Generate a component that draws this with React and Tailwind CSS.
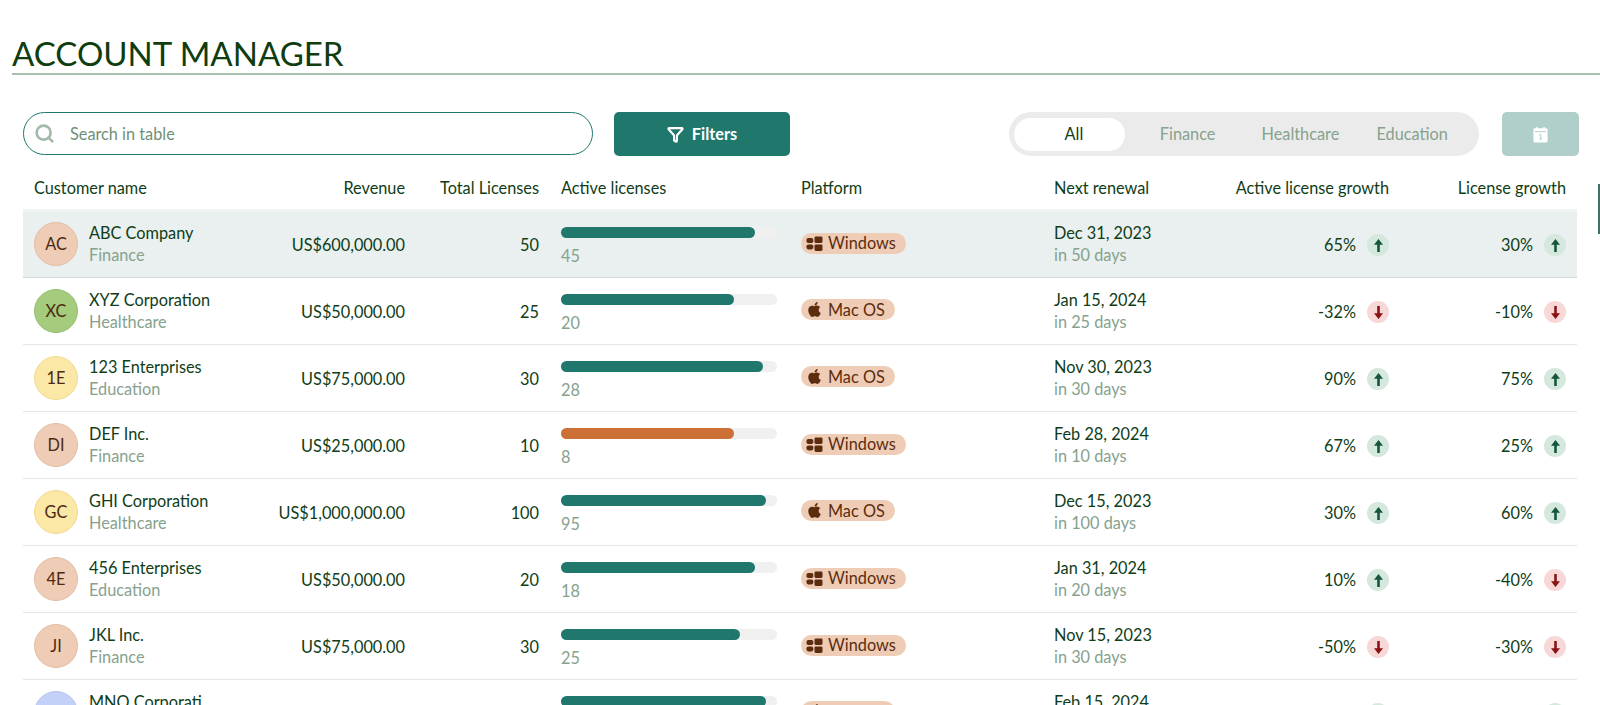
import { Funnel, Search } from "lucide-react";
import { FaApple } from "react-icons/fa";

const customers = [
  { initials: "AC", name: "ABC Company", sector: "Finance", tone: "bg-[#efccb5] border-[#e4bda4]", revenue: "US$600,000.00", total: 50, active: 45, pct: "w-[90%]", os: "Windows", date: "Dec 31, 2023", days: "in 50 days", activeGrowth: 65, growth: 30 },
  { initials: "XC", name: "XYZ Corporation", sector: "Healthcare", tone: "bg-[#a5cb7c] border-[#97bf70]", revenue: "US$50,000.00", total: 25, active: 20, pct: "w-[80%]", os: "Mac OS", date: "Jan 15, 2024", days: "in 25 days", activeGrowth: -32, growth: -10 },
  { initials: "1E", name: "123 Enterprises", sector: "Education", tone: "bg-[#fbe7a6] border-[#f1da92]", revenue: "US$75,000.00", total: 30, active: 28, pct: "w-[93.5%]", os: "Mac OS", date: "Nov 30, 2023", days: "in 30 days", activeGrowth: 90, growth: 75 },
  { initials: "DI", name: "DEF Inc.", sector: "Finance", tone: "bg-[#efccb5] border-[#e4bda4]", revenue: "US$25,000.00", total: 10, active: 8, pct: "w-[80%]", warn: true, os: "Windows", date: "Feb 28, 2024", days: "in 10 days", activeGrowth: 67, growth: 25 },
  { initials: "GC", name: "GHI Corporation", sector: "Healthcare", tone: "bg-[#fbe7a6] border-[#f1da92]", revenue: "US$1,000,000.00", total: 100, active: 95, pct: "w-[95%]", os: "Mac OS", date: "Dec 15, 2023", days: "in 100 days", activeGrowth: 30, growth: 60 },
  { initials: "4E", name: "456 Enterprises", sector: "Education", tone: "bg-[#efccb5] border-[#e4bda4]", revenue: "US$50,000.00", total: 20, active: 18, pct: "w-[90%]", os: "Windows", date: "Jan 31, 2024", days: "in 20 days", activeGrowth: 10, growth: -40 },
  { initials: "JI", name: "JKL Inc.", sector: "Finance", tone: "bg-[#efccb5] border-[#e4bda4]", revenue: "US$75,000.00", total: 30, active: 25, pct: "w-[83%]", os: "Windows", date: "Nov 15, 2023", days: "in 30 days", activeGrowth: -50, growth: -30 },
  { initials: "MC", name: "MNO Corporati", sector: "Healthcare", tone: "bg-[#c3d0f7] border-[#b6c4ee]", revenue: "US$150,000.00", total: 40, active: 38, pct: "w-[95%]", os: "Mac OS", date: "Feb 15, 2024", days: "in 40 days", activeGrowth: 20, growth: 15 },
];

const rowGrid =
  "grid grid-cols-[227px_155px_134px_262px_253px_146px_189px_177px_11px] items-center";

const WindowsIcon = () => (
  <svg viewBox="0 0 16 15" className="w-[17px] h-[15px] fill-[#5c2c0e]">
    <rect x="0" y="2" width="6.8" height="5" rx="1.8" />
    <rect x="0" y="8.4" width="6.8" height="5" rx="1.8" />
    <rect x="8" y="0.4" width="8" height="6.6" rx="1.4" />
    <rect x="8" y="8.4" width="8" height="6.6" rx="1.4" />
  </svg>
);

const CalendarIcon = () => (
  <svg viewBox="0 0 18 18" className="w-[17px] h-[17px]">
    <path
      d="M3 2.5h1.5V1h1.5v1.5h6V1h1.5v1.5H15a1.5 1.5 0 0 1 1.5 1.5v12a1.5 1.5 0 0 1-1.5 1.5H3A1.5 1.5 0 0 1 1.5 16V4A1.5 1.5 0 0 1 3 2.5z"
      fill="#fff"
    />
    <path d="M3 6h12" stroke="#b0cfca" strokeWidth="1" />
    <path d="M7.6 9.6 9.2 8.8v5M7.6 13.8h3.2" stroke="#b0cfca" strokeWidth="1" fill="none" />
  </svg>
);

const Trend = ({ value }) => {
  const up = value >= 0;
  return (
    <div className="flex items-center justify-end gap-[11px] pt-[2px]">
      <span>{value}%</span>
      <span
        className={`w-[22px] h-[22px] rounded-full flex items-center justify-center ${
          up ? "bg-[#d5e8dd]" : "bg-[#f7d7d7]"
        }`}
      >
        <svg
          viewBox="0 0 12 14"
          className={`w-[13px] h-[15px] ${up ? "fill-[#14573a]" : "fill-[#8a1212] rotate-180"}`}
        >
          <path d="M6 1 10.2 6.2H7.2V13H4.8V6.2H1.8z" />
        </svg>
      </span>
    </div>
  );
};

const Row = ({ c, selected }) => (
  <div
    className={`${rowGrid} h-[67px] border-b ${
      selected ? "bg-[#e9f0ef] border-[#cfdad9]" : "border-[#e4e6e5]"
    }`}
  >
    <div className="flex items-center gap-[11px] pl-[11px]">
      <div
        className={`w-[44px] h-[44px] shrink-0 rounded-full border flex items-center justify-center text-[#4a2a12] ${c.tone}`}
      >
        {c.initials}
      </div>
      <div>
        <div className="leading-[22px]">{c.name}</div>
        <div className="leading-[22px] text-[#86a28e]">{c.sector}</div>
      </div>
    </div>
    <div className="text-right pt-[2px]">{c.revenue}</div>
    <div className="text-right pt-[2px]">{c.total}</div>
    <div className="pl-[22px] pr-[24px] pt-[6px]">
      <div className="h-[11px] rounded-full bg-[#f0f0f0]">
        <div className={`h-full rounded-full ${c.pct} ${c.warn ? "bg-[#cc7038]" : "bg-[#20786d]"}`} />
      </div>
      <div className="mt-[7px] leading-[22px] text-[#86a28e]">{c.active}</div>
    </div>
    <div className="pt-[2px]">
      <span className="inline-flex items-center gap-[5px] h-[21px] pl-[5px] pr-[10px] rounded-full bg-[#efccb5] text-[#5c2c0e]">
        {c.os === "Windows" ? <WindowsIcon /> : <FaApple className="w-[17px] h-[17px] text-[#5c2c0e]" />}
        {c.os}
      </span>
    </div>
    <div>
      <div className="leading-[22px]">{c.date}</div>
      <div className="leading-[22px] text-[#86a28e]">{c.days}</div>
    </div>
    <Trend value={c.activeGrowth} />
    <Trend value={c.growth} />
  </div>
);

const App = () => {
  return (
    <div className="relative h-[705px] overflow-hidden bg-white text-[16.3px] text-[#0f3d17] font-['Lato',sans-serif]">
      <div className="ml-3 pt-[33px] border-b-2 border-[#a9bfae] h-[75px]">
        <h1 className="text-[33px] leading-[40px] text-[#0f3d0f]">ACCOUNT MANAGER</h1>
      </div>

      <div className="flex items-center h-[44px] mt-[37px] ml-[23px] mr-[21px]">
        <div className="self-start flex items-center w-[570px] h-[43px] rounded-full border border-[#20786d] pl-[10px]">
          <Search className="w-[21px] h-[21px] text-[#a3b9aa]" strokeWidth={3} />
          <input
            placeholder="Search in table"
            className="ml-[15px] pt-[1px] flex-1 outline-none bg-transparent placeholder:text-[#6f8f78]"
          />
        </div>
        <button className="ml-[21px] w-[176px] h-[44px] rounded-[5px] bg-[#20786d] text-white font-bold flex items-center justify-center gap-[8px]">
          <Funnel className="w-[17px] h-[17px]" strokeWidth={3} />
          Filters
        </button>
        <div className="ml-auto flex items-center w-[470px] h-[44px] px-[5px] rounded-full bg-[#ebebeb] text-[#86a28e]">
          <div className="w-[111px] h-[33px] pl-[9px] rounded-full bg-white text-[#0f3d17] flex items-center justify-center">
            All
          </div>
          <div className="w-[126px] text-center">Finance</div>
          <div className="w-[100px] text-center">Healthcare</div>
          <div className="w-[124px] text-center">Education</div>
        </div>
        <button className="ml-[23px] w-[77px] h-[44px] rounded-[5px] bg-[#b0cfca] flex items-center justify-center">
          <CalendarIcon />
        </button>
      </div>

      <div className="mx-[23px] mt-[1px]">
        <div className={`${rowGrid} h-[54px] pt-[11px] border-b-2 border-[#f2f4f3]`}>
          <div className="pl-[11px]">Customer name</div>
          <div className="text-right">Revenue</div>
          <div className="text-right">Total Licenses</div>
          <div className="pl-[22px]">Active licenses</div>
          <div>Platform</div>
          <div>Next renewal</div>
          <div className="text-right">Active license growth</div>
          <div className="text-right">License growth</div>
        </div>
        {customers.map((c, i) => (
          <Row key={c.initials + i} c={c} selected={i === 0} />
        ))}
      </div>

      <div className="absolute right-0 top-[184px] w-[2px] h-[50px] bg-[#3f6f68]" />
    </div>
  );
};

export default App;
